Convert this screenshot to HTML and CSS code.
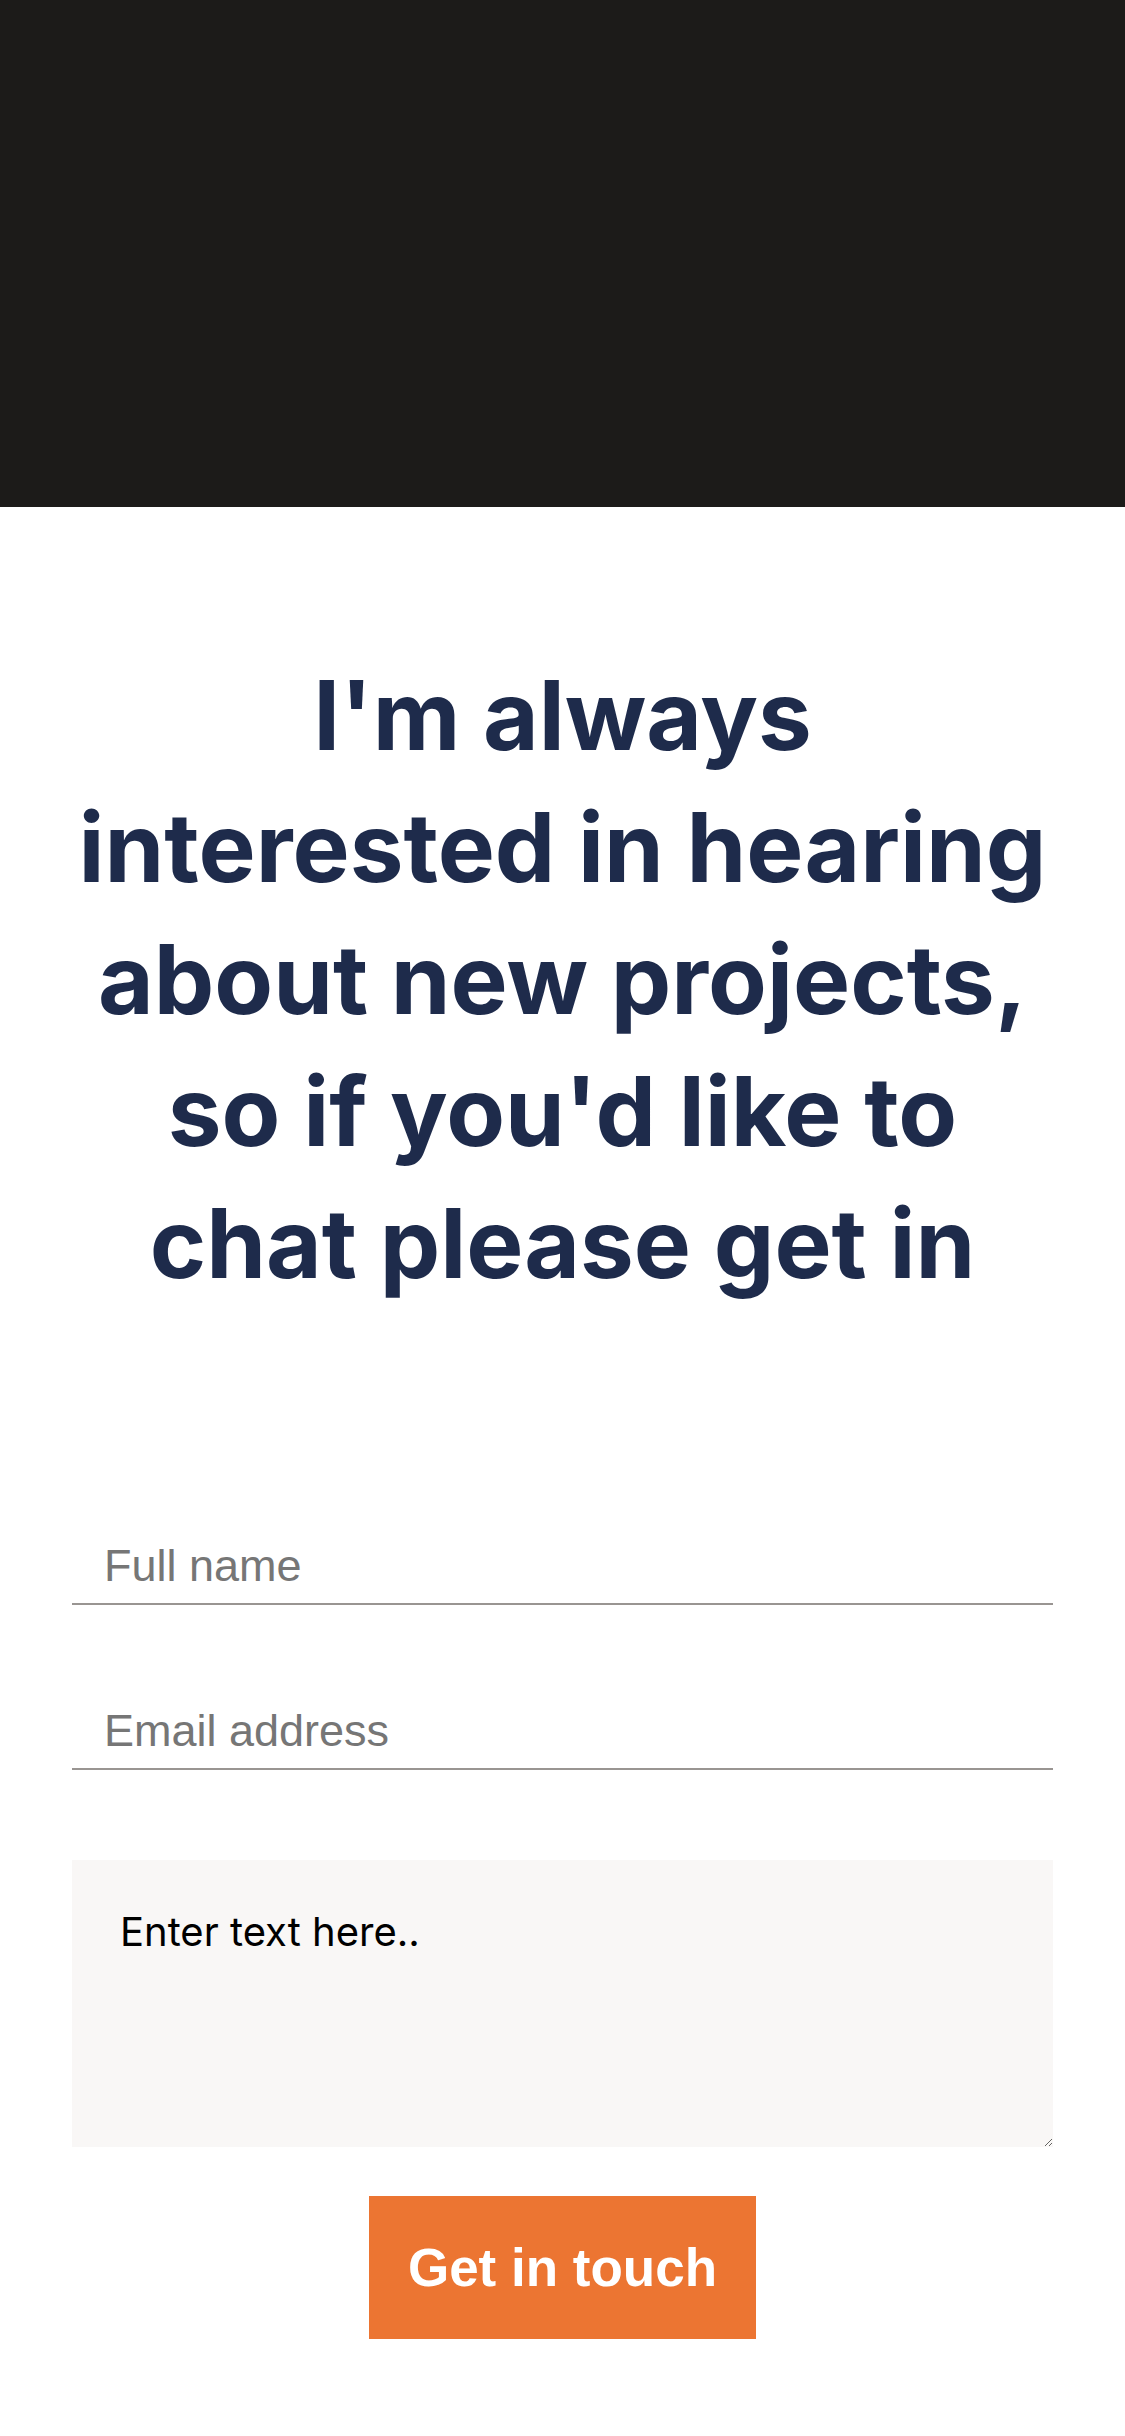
FILE: index.html
```html
<!DOCTYPE html>
<html lang="en">
<head>
<meta charset="utf-8">
<title>Contact</title>
<link rel="stylesheet" href="styles.css">
</head>
<body>
<header class="hero"></header>
<main class="contact">
  <h1 class="contact-title">I'm always interested in hearing about new projects, so if you'd like to chat please get in</h1>
  <form class="contact-form">
    <input class="field" type="text" placeholder="Full name">
    <input class="field field-email" type="email" placeholder="Email address">
    <textarea class="message">Enter text here..</textarea>
    <button class="submit" type="button">Get in touch</button>
  </form>
</main>
</body>
</html>
```
FILE: styles.css
```css
html, body {
  margin: 0;
  padding: 0;
  background: #ffffff;
}

body {
  font-family: "Liberation Sans", Arial, sans-serif;
}

.hero {
  height: 507px;
  background: #1c1b19;
}

.contact {
  padding: 142px 72px 97px;
}

.contact-title {
  margin: 0;
  font-family: Inter, "Noto Sans", sans-serif;
  font-weight: 700;
  font-size: 96px;
  line-height: 132px;
  color: #1e2b4b;
  text-align: center;
  height: 660px;
}

.contact-form {
  display: flex;
  flex-direction: column;
  margin-top: 231px;
}

.field {
  display: block;
  box-sizing: border-box;
  margin: 0;
  padding: 0 0 11px 32px;
  border: 0;
  border-bottom: 2px solid #999592;
  border-radius: 0;
  background: transparent;
  font-family: "Liberation Sans", Arial, sans-serif;
  font-size: 45px;
  line-height: 52px;
  height: 65px;
  color: #222;
  outline: none;
}

.field::placeholder {
  color: #767676;
  opacity: 1;
}

.field-email {
  margin-top: 100px;
}

.message {
  display: block;
  margin: 90px 0 0;
  height: 287px;
  box-sizing: border-box;
  padding: 47px 48px;
  border: 0;
  border-radius: 0;
  background: #f9f7f6;
  font-family: Inter, "Noto Sans", sans-serif;
  font-size: 40px;
  color: #000;
  outline: none;
}

.submit {
  align-self: center;
  margin-top: 49px;
  width: 387px;
  height: 143px;
  border: 0;
  border-radius: 0;
  background: #ec7532;
  color: #ffffff;
  font-family: "Liberation Sans", Arial, sans-serif;
  font-weight: 700;
  font-size: 53px;
  padding: 0;
  cursor: pointer;
}
```
